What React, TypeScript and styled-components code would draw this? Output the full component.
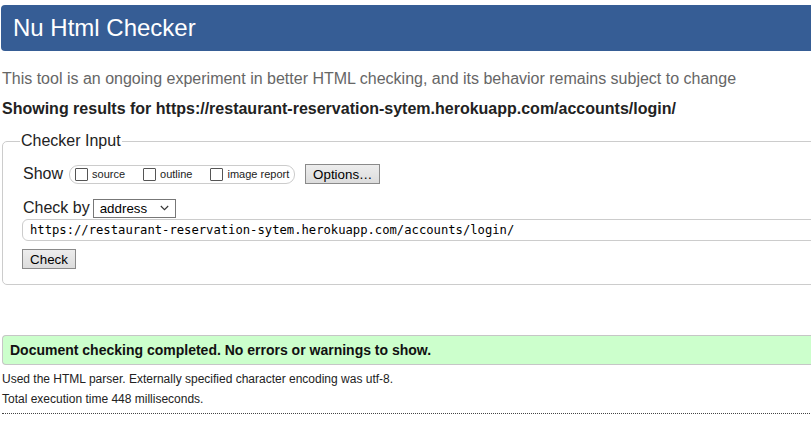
import React from "react";
import styled, { createGlobalStyle } from "styled-components";

const Global = createGlobalStyle`
  html, body { margin: 0; padding: 0; background: #fff; overflow: hidden; }
  body { font-family: "Liberation Sans", Arial, sans-serif; color: #000; }
`;

const Page = styled.div`
  width: 1100px;
  padding: 5px 0 0 2px;
`;

const Header = styled.h1`
  margin: 0 0 0 -1px;
  height: 46px;
  padding-left: 12px;
  background: #365d95;
  color: #fff;
  font-size: 24px;
  font-weight: normal;
  line-height: 46px;
  border-radius: 4px 0 0 4px;
`;

const Intro = styled.p`
  margin: 18px 0 0;
  font-size: 16px;
  line-height: 20px;
  color: #666;
`;

const Showing = styled.p`
  margin: 10px 0 0;
  font-size: 16px;
  line-height: 20px;
  font-weight: bold;
  color: #222;
`;

const Fieldset = styled.fieldset`
  margin: 13px 0 0;
  padding: 14px 20px 15px;
  border: 1px solid #ccc;
  border-radius: 5px 0 0 5px;
`;

const Legend = styled.legend`
  margin-left: -3px;
  padding: 0 1px;
  font-size: 16px;
  line-height: 18px;
  color: #222;
`;

const Row = styled.div<{ $top?: number }>`
  display: flex;
  align-items: center;
  height: 20px;
  margin-top: ${(p) => p.$top ?? 0}px;
`;

const Label = styled.span`
  font-size: 16px;
  color: #222;
`;

const Group = styled.div`
  display: flex;
  align-items: center;
  height: 17px;
  margin-left: 6px;
  padding: 0 5px 0 5px;
  border: 1px solid #ccc;
  border-radius: 9px;
`;

const Option = styled.label<{ $gap?: number }>`
  display: flex;
  align-items: center;
  margin-left: ${(p) => p.$gap ?? 0}px;
  font-size: 11px;
  color: #222;
`;

const Box = styled.span`
  display: inline-block;
  box-sizing: border-box;
  width: 13px;
  height: 13px;
  border: 1px solid #555;
  border-radius: 1px;
  background: #fff;
  margin-right: 4px;
`;

const Button = styled.button<{ $w: number; $ml?: number }>`
  box-sizing: border-box;
  width: ${(p) => p.$w}px;
  height: 20px;
  margin-left: ${(p) => p.$ml ?? 0}px;
  padding: 0;
  font-family: "Liberation Sans", Arial, sans-serif;
  font-size: 13.33px;
  color: #000;
  background: linear-gradient(#ededed, #dcdcdc);
  border: 1px solid #8a8a8a;
  border-radius: 0;
`;

const Select = styled.div`
  box-sizing: border-box;
  display: flex;
  align-items: center;
  justify-content: space-between;
  width: 83px;
  height: 19px;
  margin-left: 3px;
  padding: 0 6px 0 6px;
  border: 1px solid #777;
  font-size: 13.33px;
  color: #000;
`;

const UrlInput = styled.div`
  box-sizing: border-box;
  height: 22px;
  margin: 1px 0 0 -1px;
  padding-left: 7px;
  display: flex;
  align-items: center;
  border: 1px solid #ccc;
  border-radius: 6px 0 0 6px;
  font-family: "DejaVu Sans Mono", "Liberation Mono", monospace;
  font-size: 12.2px;
  color: #000;
`;

const Result = styled.div`
  box-sizing: border-box;
  height: 30px;
  margin-top: 50px;
  padding-left: 7px;
  display: flex;
  align-items: center;
  background: #ccffcc;
  border: 1px solid #c6c6c6;
  border-right: none;
  border-radius: 4px 0 0 4px;
  font-size: 14px;
  font-weight: bold;
  color: #111;
`;

const Detail = styled.p<{ $top: number }>`
  margin: ${(p) => p.$top}px 0 0;
  font-size: 12px;
  line-height: 14px;
  color: #222;
`;

const Dotted = styled.hr`
  margin: 7px 0 0;
  border: none;
  border-top: 1px dotted #444;
  height: 0;
`;

export default function App() {
  return (
    <>
      <Global />
      <Page>
        <Header>Nu Html Checker</Header>
        <Intro>
          This tool is an ongoing experiment in better HTML checking, and its behavior remains subject to change
        </Intro>
        <Showing>Showing results for https://restaurant-reservation-sytem.herokuapp.com/accounts/login/</Showing>
        <Fieldset>
          <Legend>Checker Input</Legend>
          <Row>
            <Label>Show</Label>
            <Group>
              <Option>
                <Box />
                source
              </Option>
              <Option $gap={18}>
                <Box />
                outline
              </Option>
              <Option $gap={18}>
                <Box />
                image report
              </Option>
            </Group>
            <Button $w={75} $ml={10}>Options…</Button>
          </Row>
          <Row $top={14}>
            <Label>Check by</Label>
            <Select>
              address
              <svg width="9" height="6" viewBox="0 0 9 6">
                <path d="M0.8 1 L4.5 4.7 L8.2 1" fill="none" stroke="#333" strokeWidth="1.1" />
              </svg>
            </Select>
          </Row>
          <UrlInput>https://restaurant-reservation-sytem.herokuapp.com/accounts/login/</UrlInput>
          <Row $top={8}>
            <Button $w={54} style={{ marginLeft: -1 }}>Check</Button>
          </Row>
        </Fieldset>
        <Result>Document checking completed. No errors or warnings to show.</Result>
        <Detail $top={7}>Used the HTML parser. Externally specified character encoding was utf-8.</Detail>
        <Detail $top={6}>Total execution time 448 milliseconds.</Detail>
        <Dotted />
      </Page>
    </>
  );
}
